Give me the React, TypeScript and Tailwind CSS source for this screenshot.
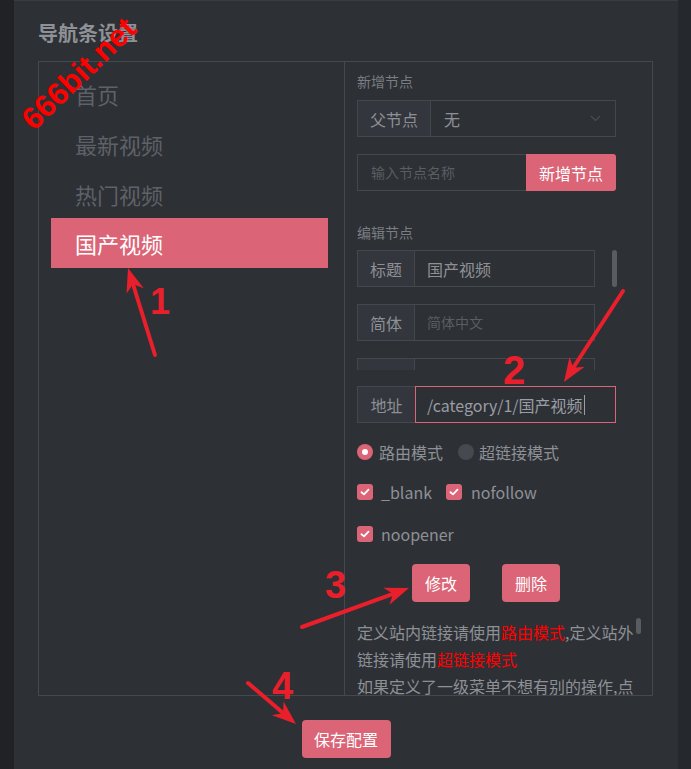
import React from 'react';

type Pt = [number, number];

const NAV = ['首页', '最新视频', '热门视频'];

// red annotation arrow, head drawn at `to`
function Arrow({ from, to }: { from: Pt; to: Pt }) {
  const [x1, y1] = from;
  const [x2, y2] = to;
  const a = Math.atan2(y2 - y1, x2 - x1);
  const c = Math.cos(a);
  const s = Math.sin(a);
  const wx = x2 - c * 24;
  const wy = y2 - s * 24;
  const nx = x2 - c * 17;
  const ny = y2 - s * 17;
  const head = `${x2},${y2} ${wx - s * 9},${wy + c * 9} ${nx},${ny} ${wx + s * 9},${wy - c * 9}`;
  return (
    <g>
      <line x1={x1} y1={y1} x2={nx} y2={ny} stroke="#e91f2b" strokeWidth={4} strokeLinecap="round" />
      <polygon points={head} fill="#e91f2b" />
    </g>
  );
}

function Check() {
  return (
    <span className="flex h-[16px] w-[16px] items-center justify-center rounded-[3px] bg-[#db6476]">
      <svg width="10" height="8" viewBox="0 0 10 8">
        <path d="M1.5 4.2 L4 6.4 L8.5 1.6" fill="none" stroke="#fff" strokeWidth="1.8" strokeLinecap="round" strokeLinejoin="round" />
      </svg>
    </span>
  );
}

function Field({ label, children }: { label: string; children: React.ReactNode }) {
  return (
    <div className="flex h-[37px] w-[238px] shrink-0 border border-[#44474c]">
      <div className="flex w-[57px] shrink-0 items-center justify-center border-r border-[#44474c] bg-[#33363c] text-[16px] text-[#8d9095]">
        {label}
      </div>
      <div className="flex flex-1 items-center pl-[12px]">{children}</div>
    </div>
  );
}

export default function App() {
  return (
    <div
      className="relative flex h-[769px] w-full overflow-hidden bg-[#202226]"
      style={{ fontFamily: '"Noto Sans CJK SC", "Noto Sans", sans-serif' }}
    >
      <div className="w-[14px] shrink-0 bg-[#202226]" />

      <div className="flex w-[664px] shrink-0 flex-col border-t border-[#393c41] bg-[#2d3035]">
        <h2 className="ml-[24px] mt-[20px] text-[20px] font-bold leading-[24px] text-[#8e9196]">导航条设置</h2>

        {/* main box */}
        <div className="ml-[24px] mt-[16px] flex h-[635px] w-[615px] shrink-0 border border-[#45484e]">
          {/* left: nav list */}
          <div className="w-[306px] shrink-0 border-r border-[#45484e] pt-[7px]">
            {NAV.map((n) => (
              <div key={n} className="flex h-[50px] items-center pl-[36px] text-[22px] text-[#5e6167]">
                {n}
              </div>
            ))}
            <div className="ml-[12px] mt-[-1px] flex h-[50px] w-[277px] items-center bg-[#db6476] pl-[24px] text-[22px] text-white">
              国产视频
            </div>
          </div>

          {/* right: editor */}
          <div className="flex-1 overflow-hidden pl-[12px]">
            <div className="mt-[9px] text-[14px] leading-[20px] text-[#7a7d82]">新增节点</div>

            <div className="mt-[9px] flex h-[37px] w-[259px] border border-[#44474c]">
              <div className="flex w-[73px] items-center justify-center border-r border-[#44474c] bg-[#33363c] text-[16px] text-[#8d9095]">
                父节点
              </div>
              <div className="flex flex-1 items-center justify-between pl-[13px] pr-[14px] text-[16px] text-[#8d9095]">
                <span>无</span>
                <svg width="11" height="7" viewBox="0 0 11 7">
                  <path d="M1 1 L5.5 5.5 L10 1" fill="none" stroke="#494c52" strokeWidth="1.2" />
                </svg>
              </div>
            </div>

            <div className="mt-[17px] flex h-[37px] w-[259px]">
              <div className="flex flex-1 items-center border border-r-0 border-[#44474c] pl-[13px] text-[14px] text-[#5a5d62]">
                输入节点名称
              </div>
              <button className="w-[90px] rounded-r-[3px] bg-[#db6476] text-[16px] text-white">新增节点</button>
            </div>

            <div className="mt-[31px] text-[14px] leading-[20px] text-[#7a7d82]">编辑节点</div>

            <div className="mt-[8px] flex h-[120px] overflow-hidden">
              <div className="flex w-[238px] flex-col gap-[17px]">
                <Field label="标题">
                  <span className="text-[16px] text-[#8d9095]">国产视频</span>
                </Field>
                <Field label="简体">
                  <span className="text-[14px] text-[#5a5d62]">简体中文</span>
                </Field>
                <Field label="繁体">
                  <span className="text-[14px] text-[#5a5d62]">繁体中文</span>
                </Field>
              </div>
              <div className="ml-[17px] h-[37px] w-[5px] rounded-full bg-[#595c61]" />
            </div>

            <div className="mt-[16px] flex h-[37px] w-[259px]">
              <div className="flex w-[58px] items-center justify-center border border-r-0 border-[#44474c] bg-[#33363c] text-[16px] text-[#8d9095]">
                地址
              </div>
              <div className="flex flex-1 items-center border border-[#db6476] pl-[11px] text-[16px] text-[#9a9da3]">
                <span>/category/1/国产视频</span>
                <span className="ml-px h-[20px] w-px bg-[#9a9da3]" />
              </div>
            </div>

            <div className="mt-[19px] flex h-[20px] items-center text-[16px] text-[#8d9095]">
              <span className="flex h-[16px] w-[16px] items-center justify-center rounded-full bg-[#db6476]">
                <span className="h-[6px] w-[6px] rounded-full bg-white" />
              </span>
              <span className="ml-[6px]">路由模式</span>
              <span className="ml-[15px] h-[16px] w-[16px] rounded-full bg-[#464950]" />
              <span className="ml-[5px]">超链接模式</span>
            </div>

            <div className="mt-[20px] flex h-[20px] items-center text-[16px] text-[#8d9095]">
              <Check />
              <span className="ml-[8px]">_blank</span>
              <span className="ml-[14px]">
                <Check />
              </span>
              <span className="ml-[9px]">nofollow</span>
            </div>

            <div className="mt-[22px] flex h-[20px] items-center text-[16px] text-[#8d9095]">
              <Check />
              <span className="ml-[8px]">noopener</span>
            </div>

            <div className="mt-[20px] flex gap-[32px] pl-[55px]">
              <button className="h-[38px] w-[58px] rounded-[4px] bg-[#db6476] text-[16px] text-white">修改</button>
              <button className="h-[38px] w-[58px] rounded-[4px] bg-[#db6476] text-[16px] text-white">删除</button>
            </div>

            <div className="mt-[17px] flex">
              <p className="w-[277px] text-[16px] leading-[27px] text-[#8d9095]">
                定义站内链接请使用<span className="text-[#ff0000]">路由模式</span>,定义站外链接请使用
                <span className="text-[#ff0000]">超链接模式</span>
                <br />
                如果定义了一级菜单不想有别的操作,点击一级菜单时不跳转,地址请留空
              </p>
              <div className="ml-[2px] mt-[-1px] h-[16px] w-[5px] rounded-full bg-[#595c61]" />
            </div>
          </div>
        </div>

        <button className="mx-auto mt-[24px] h-[38px] w-[89px] shrink-0 rounded-[4px] bg-[#db6476] text-[16px] text-white">
          保存配置
        </button>
      </div>

      <div className="flex-1 bg-[#25282c]" />

      {/* annotations */}
      <svg className="pointer-events-none absolute left-0 top-0" width="691" height="769">
        <Arrow from={[155, 355]} to={[128, 268]} />
        <Arrow from={[623, 291]} to={[564, 382]} />
        <Arrow from={[302, 627]} to={[409, 588]} />
        <Arrow from={[248, 683]} to={[296, 724]} />
      </svg>
      <span className="pointer-events-none absolute left-[150px] top-[282px] text-[36px] font-bold leading-[40px] text-[#e91f2b]" style={{ fontFamily: '"Liberation Sans", sans-serif' }}>1</span>
      <span className="pointer-events-none absolute left-[503px] top-[350px] text-[40px] font-bold leading-[40px] text-[#e91f2b]" style={{ fontFamily: '"Liberation Sans", sans-serif' }}>2</span>
      <span className="pointer-events-none absolute left-[325px] top-[565px] text-[38px] font-bold leading-[40px] text-[#e91f2b]" style={{ fontFamily: '"Liberation Sans", sans-serif' }}>3</span>
      <span className="pointer-events-none absolute left-[272px] top-[666px] text-[38px] font-bold leading-[40px] text-[#e91f2b]" style={{ fontFamily: '"Liberation Sans", sans-serif' }}>4</span>
      <span
        className="pointer-events-none absolute left-[79px] top-[74px] -translate-x-1/2 -translate-y-1/2 -rotate-[44deg] whitespace-nowrap text-[31px] font-bold leading-[32px] text-[#ff0000]"
        style={{ fontFamily: '"Liberation Sans", sans-serif' }}
      >
        666bit.net
      </span>
    </div>
  );
}
